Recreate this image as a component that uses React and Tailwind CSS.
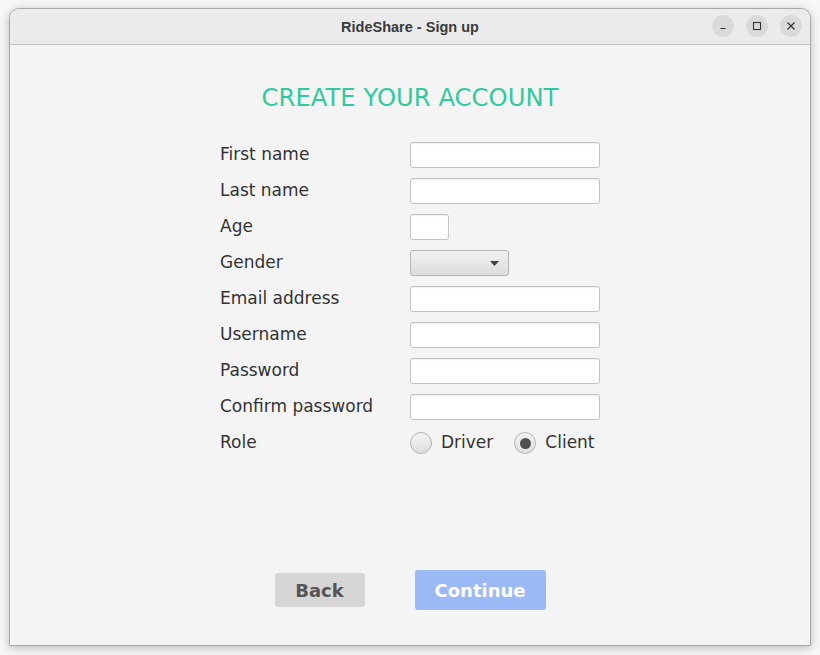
import React from 'react';

const fields = [
    { label: 'First name', type: 'text' },
    { label: 'Last name', type: 'text' },
    { label: 'Age', type: 'age' },
    { label: 'Gender', type: 'combo' },
    { label: 'Email address', type: 'text' },
    { label: 'Username', type: 'text' },
    { label: 'Password', type: 'text' },
    { label: 'Confirm password', type: 'text' },
];

const TextField = ({ width }) => (
    <div
        className={`${width} h-[26px] bg-white border border-[#c2c2c2] rounded-[3px] shadow-[inset_0_1px_1px_rgba(0,0,0,0.06)]`}
    />
);

const Radio = ({ checked, label }) => (
    <div className="flex items-center gap-[9px]">
        <div className="w-[22px] h-[22px] rounded-full border border-[#b4b4b4] bg-gradient-to-b from-[#f4f4f4] to-[#dedede] flex items-center justify-center">
            {checked && <div className="w-[11px] h-[11px] rounded-full bg-[#505050]" />}
        </div>
        <span>{label}</span>
    </div>
);

const WinButton = ({ children }) => (
    <div className="w-[22px] h-[22px] rounded-full bg-[#dadada] flex items-center justify-center text-[#333]">
        {children}
    </div>
);

const App = () => {
    return (
        <div className="w-[820px] h-[655px] bg-[#f7f7f7] pt-[8px] pl-[9px] font-['DejaVu_Sans',sans-serif]">
            <div className="w-[802px] h-[638px] flex flex-col rounded-t-[10px] border border-[#a8a8a8] bg-[#f4f4f4] shadow-[0_2px_10px_rgba(0,0,0,0.25)] overflow-hidden">
                {/* title bar */}
                <div className="h-[36px] shrink-0 bg-[#ebebeb] border-b border-[#c4c4c4] flex items-center relative">
                    <div className="flex-1 pt-[2px] text-center font-['Liberation_Sans',sans-serif] font-bold text-[14.5px] text-[#3a3a3a]">
                        RideShare - Sign up
                    </div>
                    <div className="absolute right-[8px] top-[6px] flex gap-[12px]">
                        <WinButton>
                            <svg width="10" height="10" viewBox="0 0 10 10">
                                <path d="M2.5 7.5h5" stroke="#333" strokeWidth="1.2" />
                            </svg>
                        </WinButton>
                        <WinButton>
                            <svg width="10" height="10" viewBox="0 0 10 10">
                                <rect x="1.5" y="1.5" width="7" height="7" fill="none" stroke="#333" strokeWidth="1.1" />
                            </svg>
                        </WinButton>
                        <WinButton>
                            <svg width="10" height="10" viewBox="0 0 10 10">
                                <path d="M1.5 1.5l7 7M8.5 1.5l-7 7" stroke="#333" strokeWidth="1.2" />
                            </svg>
                        </WinButton>
                    </div>
                </div>

                {/* content */}
                <div className="flex flex-col items-center">
                    <h1 className="mt-[39px] text-[24.3px] leading-[28px] text-[#33c99f]">CREATE YOUR ACCOUNT</h1>

                    <div className="mt-[30px] flex flex-col gap-[10px] text-[17px] text-[#333]">
                        {fields.map((f) => (
                            <div key={f.label} className="flex items-center h-[26px]">
                                <span className="w-[190px]">{f.label}</span>
                                {f.type === 'text' && <TextField width="w-[190px]" />}
                                {f.type === 'age' && <TextField width="w-[39px]" />}
                                {f.type === 'combo' && (
                                    <div className="w-[99px] h-[26px] rounded-[3px] border border-[#b3b3b3] bg-gradient-to-b from-[#f2f2f2] to-[#dcdcdc] flex items-center justify-end pr-[9px]">
                                        <svg width="9" height="5" viewBox="0 0 9 5">
                                            <path d="M0 0h9L4.5 5z" fill="#444" />
                                        </svg>
                                    </div>
                                )}
                            </div>
                        ))}
                        <div className="flex items-center h-[26px]">
                            <span className="w-[190px]">Role</span>
                            <div className="flex items-center gap-[21px]">
                                <Radio label="Driver" />
                                <Radio label="Client" checked />
                            </div>
                        </div>
                    </div>

                    <div className="mt-[114px] flex items-center gap-[50px]">
                        <button className="w-[90px] h-[34px] rounded-[3px] bg-[#d6d6d6] text-[#555] font-bold text-[18px]">
                            Back
                        </button>
                        <button className="w-[131px] h-[40px] rounded-[3px] bg-[#9bb9f4] text-white font-bold text-[18px]">
                            Continue
                        </button>
                    </div>
                </div>
            </div>
        </div>
    );
};

export default App;
